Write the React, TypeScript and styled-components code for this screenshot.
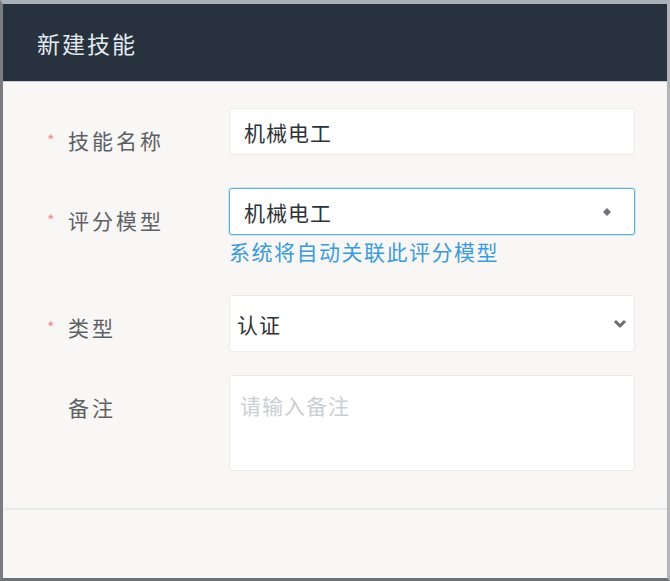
import * as React from "react";
import styled, { createGlobalStyle } from "styled-components";

const GlobalStyle = createGlobalStyle`
  html, body {
    margin: 0;
    padding: 0;
    background: #f8f7f6;
  }
  * {
    box-sizing: border-box;
  }
`;

const Frame = styled.div`
  width: 670px;
  height: 581px;
  display: flex;
  flex-direction: column;
  background: #f8f7f6;
  border-top: 4px solid #a9b0b8;
  border-left: 3px solid #7a7c80;
  border-right: 3px solid #b3b5b8;
  border-bottom: 3px solid #6e7073;
  font-family: "Noto Sans CJK SC", "Noto Sans", sans-serif;
`;

const Header = styled.div`
  height: 78px;
  background: #28323f;
  display: flex;
  align-items: center;
  padding-left: 34px;
  border-bottom: 1px solid #c9cdd2;
`;

const Title = styled.h1`
  margin: 0;
  font-size: 23px;
  font-weight: 400;
  letter-spacing: 2px;
  color: #e4eaee;
`;

const Body = styled.div`
  padding: 26px 32px 37px 0;
  display: flex;
  flex-direction: column;
  border-bottom: 2px solid #e7ebeb;
`;

const Row = styled.div<{ $gap: number }>`
  display: grid;
  grid-template-columns: 226px 1fr;
  margin-bottom: ${(p) => p.$gap}px;
`;

const Label = styled.div<{ $required?: boolean }>`
  display: flex;
  align-items: center;
  padding-top: 20px;
  padding-left: 44px;
  height: 44px;
  font-size: 21px;
  letter-spacing: 3px;
  color: #5d6065;
  line-height: 24px;
  &::before {
    content: "*";
    width: 21px;
    font-size: 16px;
    color: ${(p) => (p.$required ? "#ec8f8f" : "transparent")};
    letter-spacing: 0;
  }
`;

const Field = styled.div`
  display: flex;
  flex-direction: column;
`;

const Box = styled.div<{ $focused?: boolean; $height: number; $padL: number; $padR: number }>`
  height: ${(p) => p.$height}px;
  background: #fff;
  border: 1px solid ${(p) => (p.$focused ? "#5cb1e2" : "#ebebeb")};
  border-radius: 3px;
  display: flex;
  align-items: center;
  justify-content: space-between;
  padding: 0 ${(p) => p.$padR}px 0 ${(p) => p.$padL}px;
  font-size: 21px;
  letter-spacing: 1px;
  color: #2f3236;
  box-shadow: ${(p) => (p.$focused ? "0 0 0 1px rgba(92,177,226,0.25)" : "none")};
`;

const Area = styled.div`
  height: 96px;
  background: #fff;
  border: 1px solid #ebebeb;
  border-radius: 3px;
  padding: 14px 10px;
  font-size: 21px;
  letter-spacing: 1px;
  color: #c9cfd3;
`;

const Help = styled.div`
  margin-top: 5px;
  font-size: 21px;
  letter-spacing: 1.5px;
  color: #3b9bdb;
  line-height: 22px;
`;

const Footer = styled.div`
  flex: 1;
`;

function Dot() {
  return (
    <svg width="10" height="10" viewBox="0 0 10 10">
      <path d="M5 1 L9 5 L5 9 L1 5 Z" fill="#6f7378" />
    </svg>
  );
}

function ChevronDown() {
  return (
    <svg width="14" height="10" viewBox="0 0 14 10">
      <path d="M2 2 L7 7 L12 2" fill="none" stroke="#6a6d71" strokeWidth="3" strokeLinejoin="round" />
    </svg>
  );
}

export default function App() {
  return (
    <>
      <GlobalStyle />
      <Frame>
        <Header>
          <Title>新建技能</Title>
        </Header>
        <Body>
          <Row $gap={33}>
            <Label $required>技能名称</Label>
            <Field>
              <Box $height={47} $padL={14} $padR={22}>机械电工</Box>
            </Field>
          </Row>

          <Row $gap={33}>
            <Label $required>评分模型</Label>
            <Field>
              <Box $height={47} $padL={14} $padR={22} $focused>
                机械电工
                <Dot />
              </Box>
              <Help>系统将自动关联此评分模型</Help>
            </Field>
          </Row>

          <Row $gap={23}>
            <Label $required>类型</Label>
            <Field>
              <Box $height={57} $padL={7} $padR={7}>
                认证
                <ChevronDown />
              </Box>
            </Field>
          </Row>

          <Row $gap={0}>
            <Label>备注</Label>
            <Field>
              <Area>请输入备注</Area>
            </Field>
          </Row>
        </Body>
        <Footer />
      </Frame>
    </>
  );
}
